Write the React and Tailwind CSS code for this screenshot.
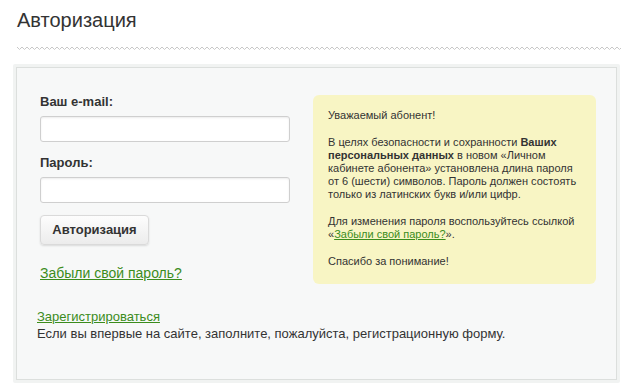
import React from 'react';

// ─── Wavy divider ────────────────────────────────────────────────────────────

function Wave() {
  return (
    <svg className="block w-full h-[6px]" preserveAspectRatio="none">
      <defs>
        <pattern id="wave" width="5" height="6" patternUnits="userSpaceOnUse">
          <path d="M0 2 L2.5 4.5 L5 2" fill="none" stroke="#c8c8c8" strokeWidth="1" />
        </pattern>
      </defs>
      <rect width="100%" height="6" fill="url(#wave)" />
    </svg>
  );
}

// ─── Notice box ──────────────────────────────────────────────────────────────

function Notice() {
  return (
    <div className="w-[285px] h-[189px] mt-[1px] rounded-[6px] bg-[#f8f5c4] pl-[15px] pr-[12px] pt-[14px] text-[11px] leading-[13px] text-[#333] font-['Liberation_Sans',Arial,sans-serif]">
      <p>Уважаемый абонент!</p>
      <p className="mt-[14px]">
        В целях безопасности и сохранности <b>Ваших персональных данных</b> в новом «Личном
        кабинете абонента» установлена длина пароля от 6 (шести) символов. Пароль должен
        состоять только из латинских букв и/или цифр.
      </p>
      <p className="mt-[14px]">
        Для изменения пароля воспользуйтесь ссылкой «<a href="#" className="text-[#3b8c1c] underline">Забыли свой пароль?</a>».
      </p>
      <p className="mt-[14px]">Спасибо за понимание!</p>
    </div>
  );
}

// ─── Page ────────────────────────────────────────────────────────────────────

export default function App() {
  return (
    <div className="w-[633px] h-[390px] bg-white font-['Liberation_Sans',Arial,sans-serif] text-[#333] overflow-hidden">
      <div className="pl-[17px] pr-[12px] pt-[7px]">
        <h1 className="text-[20px] leading-[26px] text-[#333]">Авторизация</h1>
        <div className="mt-[12px]">
          <Wave />
        </div>
      </div>

      <div className="mx-[13px] mt-[13px] p-[3px] bg-[#f1f3f2] rounded-[2px]">
        <div className="border border-[#dcdfdd] bg-[#f7f8f8] h-[313px] pl-[23px] pr-[20px] pt-[26px]">
          <div className="flex gap-[23px]">
            <div className="w-[250px]">
              <label className="block text-[13px] font-bold leading-[16px]">Ваш e-mail:</label>
              <input className="block mt-[6px] w-[250px] h-[26px] bg-white border border-[#cfcfcf] rounded-[3px] shadow-[inset_0_1px_2px_rgba(0,0,0,0.08)]" />
              <label className="block mt-[13px] text-[13px] font-bold leading-[16px]">Пароль:</label>
              <input type="password" className="block mt-[6px] w-[250px] h-[26px] bg-white border border-[#cfcfcf] rounded-[3px] shadow-[inset_0_1px_2px_rgba(0,0,0,0.08)]" />
              <button className="mt-[12px] w-[109px] h-[30px] rounded-[4px] border border-[#dadada] bg-gradient-to-b from-[#fdfdfd] to-[#ececec] shadow-[0_1px_2px_rgba(0,0,0,0.12)] text-[13px] font-bold text-[#333]">
                Авторизация
              </button>
              <div className="mt-[19px] text-[14px] leading-[18px]">
                <a href="#" className="text-[#3b8c1c] underline">Забыли свой пароль?</a>
              </div>
            </div>
            <Notice />
          </div>

          <div className="-ml-[3px] mt-[24px] text-[13px] leading-[17px]">
            <a href="#" className="text-[#3b8c1c] underline">Зарегистрироваться</a>
            <p>Если вы впервые на сайте, заполните, пожалуйста, регистрационную форму.</p>
          </div>
        </div>
      </div>
    </div>
  );
}
